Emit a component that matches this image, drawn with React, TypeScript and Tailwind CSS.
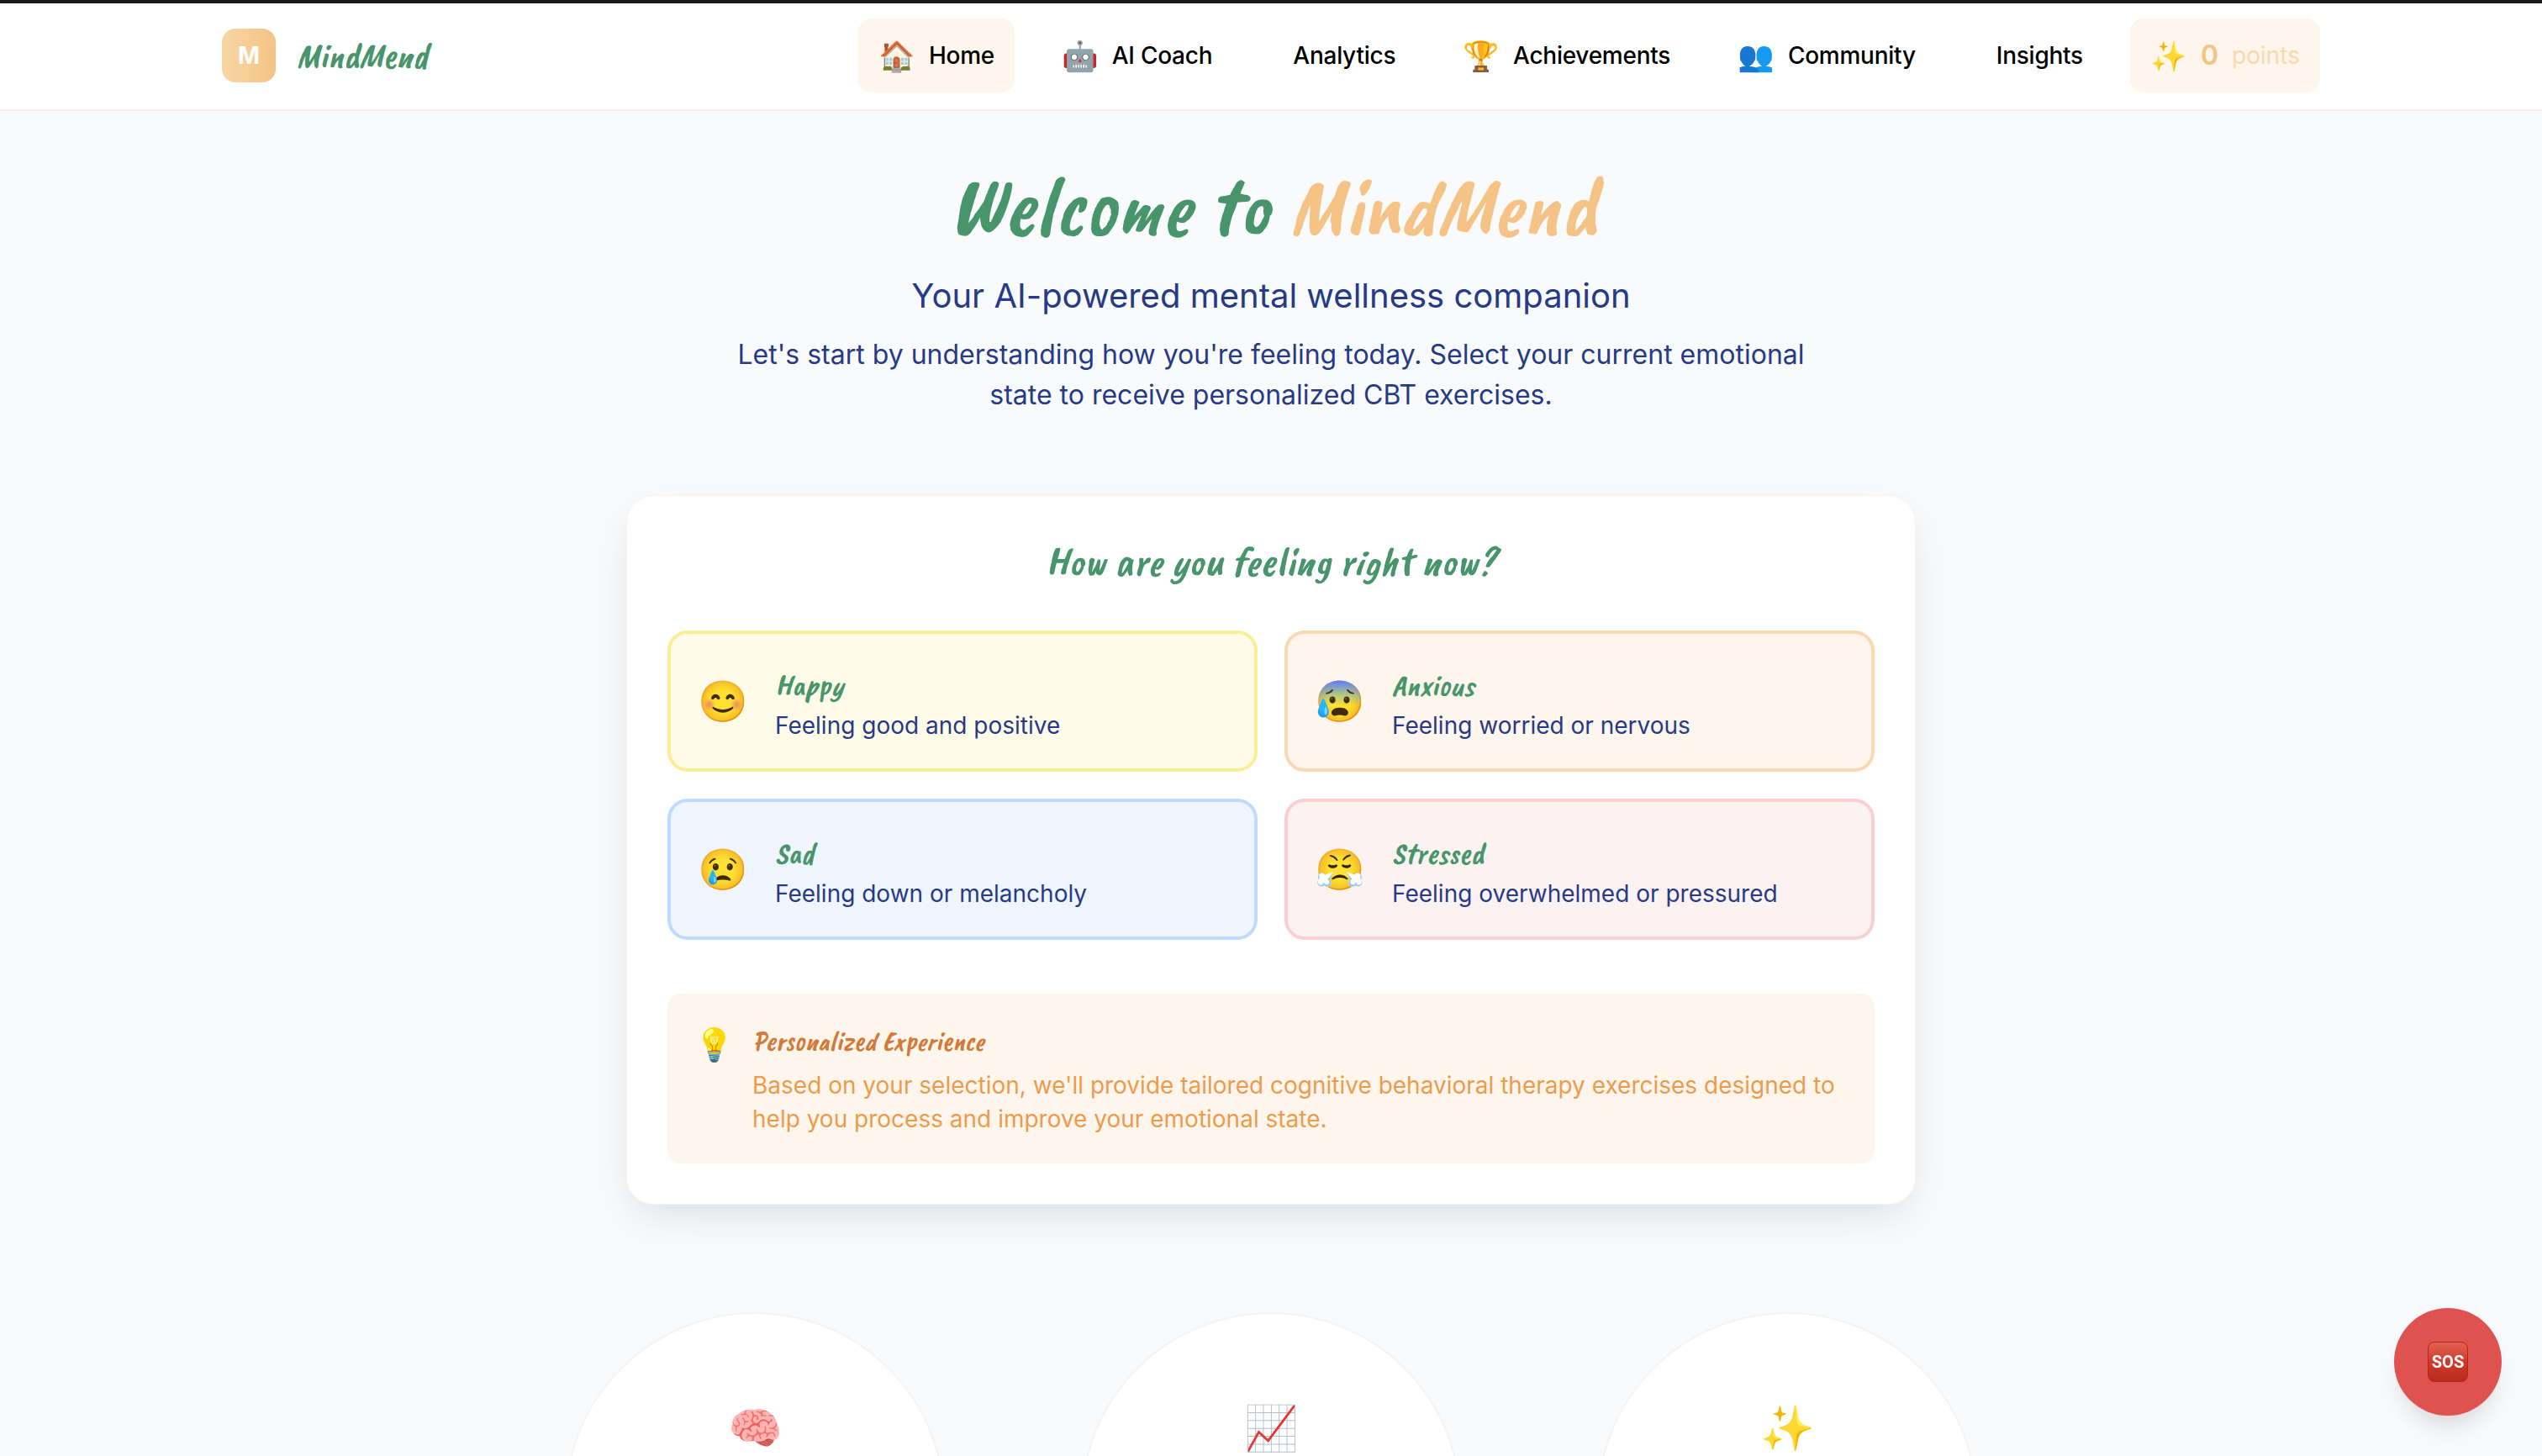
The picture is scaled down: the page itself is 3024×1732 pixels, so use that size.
const script = "font-['Caveat_Brush','Caveat','Lato',cursive] italic"

const navItems = [
  { icon: "🏠", label: "Home", active: true },
  { icon: "🤖", label: "AI Coach" },
  { icon: "", label: "Analytics" },
  { icon: "🏆", label: "Achievements" },
  { icon: "👥", label: "Community" },
  { icon: "", label: "Insights" },
]

const moods = [
  { icon: "😊", title: "Happy", text: "Feeling good and positive", cls: "bg-yellow-50 border-[#fcee95]" },
  { icon: "😰", title: "Anxious", text: "Feeling worried or nervous", cls: "bg-[#fef5ec] border-[#f8d9b2]" },
  { icon: "😢", title: "Sad", text: "Feeling down or melancholy", cls: "bg-blue-50 border-blue-200" },
  { icon: "😤", title: "Stressed", text: "Feeling overwhelmed or pressured", cls: "bg-[#fdf2f2] border-[#f9cfcf]" },
]

export default function App() {
  return (
    <div className="relative h-[1732px] overflow-hidden bg-[#f9fafb] font-['Inter',sans-serif] text-[#263a85]">
      <div className="h-[4px] bg-[#1a1a1a]" />
      <header className="h-[128px] bg-white border-b-2 border-[#f0f1f3] pb-[2px]">
        <div className="mx-auto max-w-[2560px] h-full px-8 flex items-center justify-between">
          <div className="flex items-center gap-6">
            <div className="w-16 h-16 rounded-2xl bg-gradient-to-r from-[#f8d7a5] to-[#f4c385] flex items-center justify-center text-white text-[28px] font-bold">
              M
            </div>
            <span className={`${script} text-[42px] text-[#48956b]`}>MindMend</span>
          </div>
          <nav className="flex items-center gap-8">
            {navItems.map((item) => (
              <a
                key={item.label}
                className={`h-[88px] px-6 rounded-2xl flex items-center gap-4 text-[28px] tracking-[-0.25px] font-medium text-black ${item.active ? "bg-[#fef6ec]" : ""}`}
              >
                <span className="text-[35px]">{item.icon}</span>
                <span>{item.label}</span>
              </a>
            ))}
            <div className="h-[88px] px-6 rounded-2xl bg-[#fef6ec] flex items-center gap-4 text-[32px]">
              <span className="text-[35px]">✨</span>
              <span className="font-semibold text-[#f4c385]">0</span>
              <span className="text-[#f9d9ad] text-[28px]">points</span>
            </div>
          </nav>
        </div>
      </header>

      <main className="flex flex-col items-center">
        <h1 className={`${script} mt-[54px] ml-[5px] text-[99px] leading-[119px] text-[#48956b]`}>
          Welcome to <span className="text-[#f4c385]">MindMend</span>
        </h1>
        <p className="mt-[19px] text-[40px] leading-[56px]">Your AI-powered mental wellness companion</p>
        <p className="mt-[18px] w-[1344px] text-center text-[32px] leading-[48px]">
          Let's start by understanding how you're feeling today. Select your current emotional state to receive personalized CBT exercises.
        </p>

        <section className="mt-[95px] w-[1534px] rounded-[32px] bg-white border border-[#f3f4f6] shadow-[0_20px_50px_-10px_rgba(0,0,0,0.12)] p-12">
          <h2 className={`${script} text-center text-[49px] leading-[60px] text-[#48956b]`}>How are you feeling right now?</h2>
          <div className="mt-[52px] grid grid-cols-2 gap-8">
            {moods.map((m) => (
              <div key={m.title} className={`h-[168px] rounded-3xl border-4 px-8 flex items-center gap-8 ${m.cls}`}>
                <span className="text-[48px]">{m.icon}</span>
                <div className="pt-2">
                  <div className={`${script} text-[36px] leading-[48px] text-[#48956b]`}>{m.title}</div>
                  <div className="mt-[2px] text-[28px] leading-[44px]">{m.text}</div>
                </div>
              </div>
            ))}
          </div>
          <div className="mt-[64px] h-[202px] rounded-2xl bg-[#fef6ec] px-8 py-9 flex gap-[22px]">
            <span className="text-[38px] leading-[48px]">💡</span>
            <div>
              <div className={`${script} text-[33px] leading-[40px] text-[#d17a3a]`}>Personalized Experience</div>
              <p className="mt-[13px] text-[28px] leading-[40px] text-[#ed9b4c]">
                Based on your selection, we'll provide tailored cognitive behavioral therapy exercises designed to help you process and improve your emotional state.
              </p>
            </div>
          </div>
        </section>

        <div className="mt-[128px] flex gap-[162px]">
          {["🧠", "📈", "✨"].map((e, i) => (
            <div key={i} className="w-[452px] h-[452px] rounded-full bg-white border-2 border-[#f3f4f6] flex justify-center pt-[106px] text-[52px] leading-[60px]">
              {e}
            </div>
          ))}
        </div>
      </main>

      <button className="fixed right-12 bottom-12 w-32 h-32 rounded-full bg-[#de5250] shadow-[0_20px_30px_-10px_rgba(0,0,0,0.15)] flex items-center justify-center">
        <span className="w-12 h-12 rounded-lg bg-gradient-to-b from-[#e2604f] via-[#cf3a2a] to-[#b92b1c] border border-[#a92a1e] flex items-center justify-center text-white font-['Roboto',sans-serif] font-bold text-[20px]">
          SOS
        </span>
      </button>
    </div>
  )
}
